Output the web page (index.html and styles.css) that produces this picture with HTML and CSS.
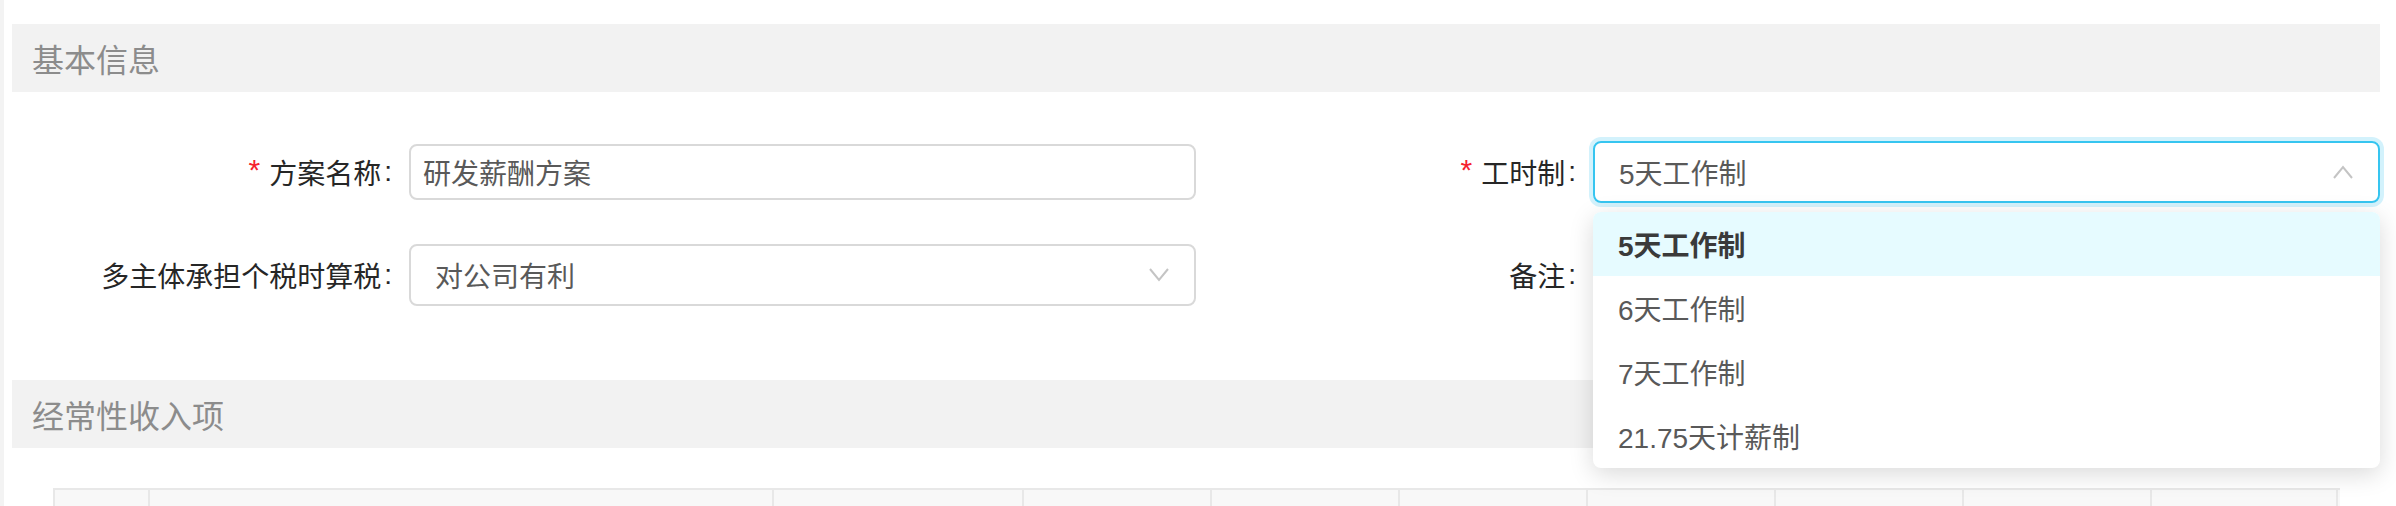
FILE: index.html
```html
<!DOCTYPE html>
<html lang="zh-CN">
<head>
    <meta charset="UTF-8">
    <title>薪酬方案</title>
    <link rel="stylesheet" href="styles.css">
</head>
<body>
    <div class="page">
        <div class="section-title">基本信息</div>

        <div class="form-grid">
            <div class="form-item">
                <label class="form-label"><span class="required">*</span>方案名称<span class="colon">:</span></label>
                <div class="form-control">
                    <div class="input">研发薪酬方案</div>
                </div>
            </div>

            <div class="form-item">
                <label class="form-label"><span class="required">*</span>工时制<span class="colon">:</span></label>
                <div class="form-control select-wrap">
                    <div class="select select-open">
                        <span>5天工作制</span>
                        <svg class="arrow" width="20" height="14" viewBox="0 0 20 14"><path d="M1 13 L10 2 L19 13" fill="none" stroke="#c4c4c4" stroke-width="2"/></svg>
                    </div>
                    <ul class="dropdown">
                        <li class="option option-selected">5天工作制</li>
                        <li class="option">6天工作制</li>
                        <li class="option">7天工作制</li>
                        <li class="option">21.75天计薪制</li>
                    </ul>
                </div>
            </div>

            <div class="form-item">
                <label class="form-label">多主体承担个税时算税<span class="colon">:</span></label>
                <div class="form-control">
                    <div class="select">
                        <span>对公司有利</span>
                        <svg class="arrow" width="20" height="14" viewBox="0 0 20 14"><path d="M1 1 L10 12 L19 1" fill="none" stroke="#c4c4c4" stroke-width="2"/></svg>
                    </div>
                </div>
            </div>

            <div class="form-item">
                <label class="form-label">备注<span class="colon">:</span></label>
                <div class="form-control">
                    <div class="input"></div>
                </div>
            </div>
        </div>

        <div class="section-title section-gap">经常性收入项</div>

        <div class="income-table">
            <div class="table-head">
                <div class="cell col-index"></div>
                <div class="cell col-name"></div>
                <div class="cell col-type"></div>
                <div class="cell"></div>
                <div class="cell"></div>
                <div class="cell"></div>
                <div class="cell"></div>
                <div class="cell"></div>
                <div class="cell"></div>
                <div class="cell cell-last"></div>
            </div>
        </div>
    </div>
</body>
</html>
```

FILE: styles.css
```css
/* Base */
html, body {
    margin: 0;
    padding: 0;
    height: 506px;
    overflow: hidden;
    background: #f3f3f3;
    font-family: "Liberation Sans", "Noto Sans CJK SC", sans-serif;
}

.page {
    margin-left: 4px;
    height: 506px;
    background: #fff;
    padding: 24px 16px 0 8px;
    box-sizing: border-box;
}

/* Section headers */
.section-title {
    height: 68px;
    background: #f2f2f2;
    color: #8c8c8c;
    font-size: 32px;
    padding-left: 20px;
    display: flex;
    align-items: center;
}

.section-gap {
    margin-top: 74px;
}

/* Form */
.form-grid {
    display: grid;
    grid-template-columns: 1184px 1184px;
    row-gap: 41px;
    margin-top: 49px;
}

.form-item {
    display: flex;
    align-items: center;
    height: 62px;
}

.form-label {
    width: 397px;
    flex-shrink: 0;
    display: flex;
    justify-content: flex-end;
    align-items: center;
    font-size: 28px;
    color: #262626;
}

.required {
    color: #f5222d;
    font-size: 30px;
    margin-right: 9px;
    position: relative;
    top: -2px;
}

.colon {
    margin: 0 17px 0 3px;
}

.form-control {
    width: 788px;
}

.input {
    height: 56px;
    box-sizing: border-box;
    border: 2px solid #d9d9d9;
    border-radius: 8px;
    padding: 0 12px;
    font-size: 28px;
    color: #595959;
    display: flex;
    align-items: center;
}

.select {
    height: 62px;
    box-sizing: border-box;
    border: 2px solid #d9d9d9;
    border-radius: 8px;
    padding: 0 24px;
    font-size: 28px;
    color: #595959;
    display: flex;
    align-items: center;
    justify-content: space-between;
}

.select-open {
    border-color: #36c5f0;
    box-shadow: 0 0 0 4px rgba(54, 197, 240, 0.22);
}

.arrow {
    margin-right: 1px;
}

/* Dropdown */
.select-wrap {
    position: relative;
}

.dropdown {
    position: absolute;
    top: 71px;
    left: 0;
    right: 0;
    margin: 0;
    padding: 0;
    list-style: none;
    background: #fff;
    border-radius: 8px;
    box-shadow: 0 6px 24px rgba(0, 0, 0, 0.15);
    overflow: hidden;
    z-index: 10;
}

.option {
    height: 64px;
    padding: 0 25px;
    display: flex;
    align-items: center;
    font-size: 28px;
    color: #595959;
}

.option-selected {
    background: #e6fbff;
    color: #3a3a3a;
    font-weight: 600;
}

/* Table */
.income-table {
    margin: 40px 40px 0 41px;
    border-top: 2px solid #e8e8e8;
}

.table-head {
    display: flex;
    height: 80px;
    background: #f8f8f8;
}

.cell {
    width: 188px;
    flex-shrink: 0;
    box-sizing: border-box;
    border-left: 2px solid #e8e8e8;
}

.cell-last {
    border-right: 2px solid #e8e8e8;
}

.col-index {
    width: 95px;
}

.col-name {
    width: 624px;
}

.col-type {
    width: 250px;
}
```
